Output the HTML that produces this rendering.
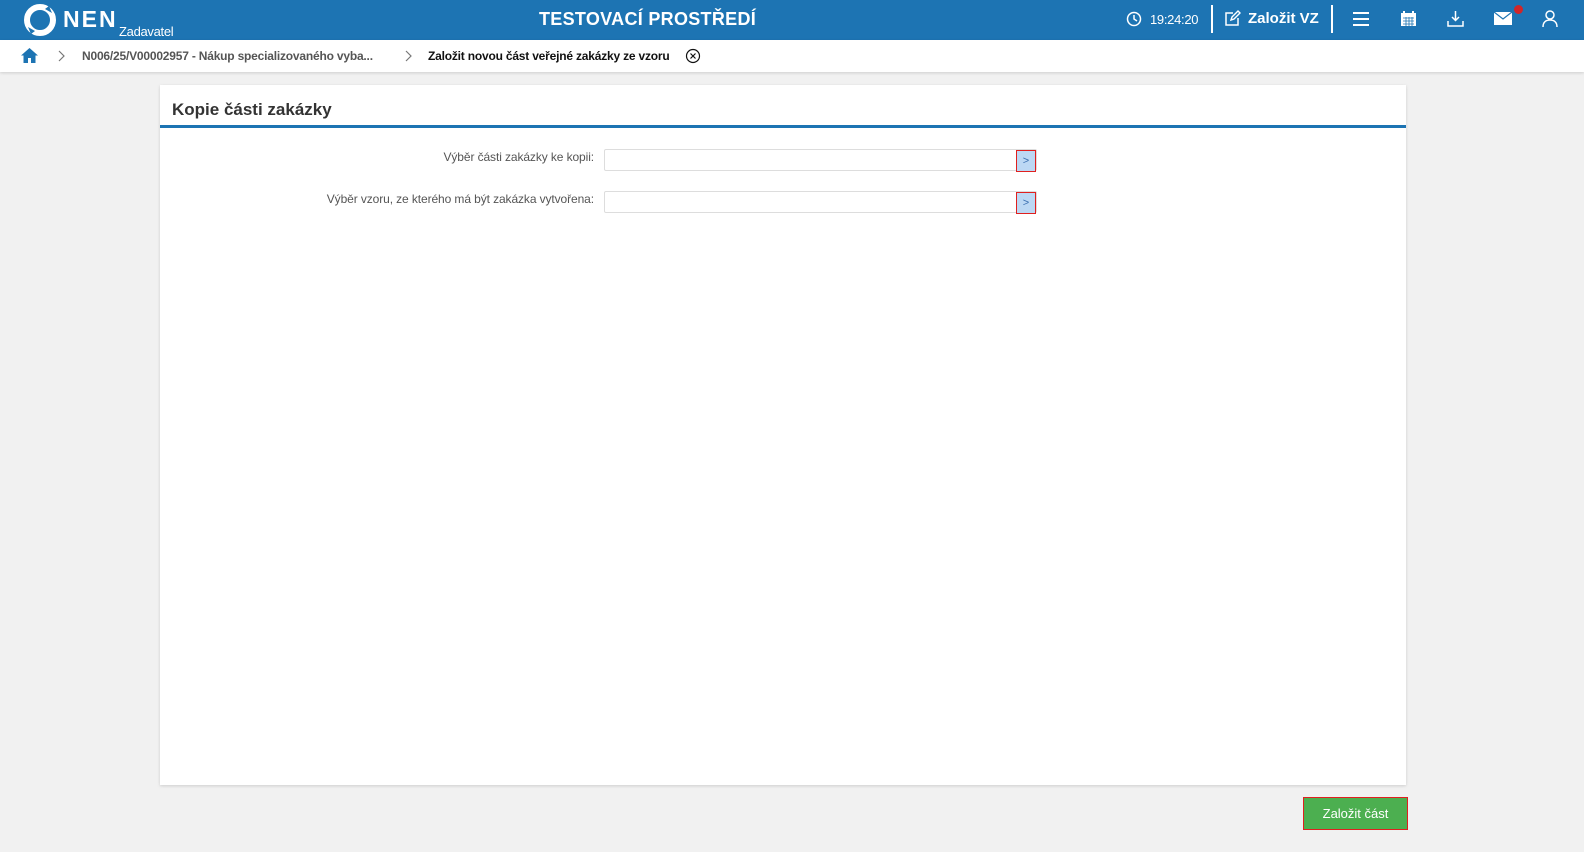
<!DOCTYPE html>
<html><head><meta charset="utf-8"><style>
*{box-sizing:border-box;margin:0;padding:0}
body{width:1584px;height:852px;background:#f1f1f1;font-family:"Liberation Sans",sans-serif;position:relative;overflow:hidden}
.hdr{position:absolute;left:0;top:0;width:1584px;height:40px;background:#1d74b3;color:#fff}
.a{position:absolute}
.bc{position:absolute;top:40px;left:0;width:1584px;height:32px;background:#fff;box-shadow:0 1px 3px rgba(0,0,0,.15);font-size:12px;font-weight:bold;letter-spacing:-.2px}
.card{position:absolute;left:160px;top:85px;width:1246px;height:700px;background:#fff;box-shadow:0 1px 3px rgba(0,0,0,.15)}
.lbl{position:absolute;right:0;font-size:12px;color:#555;text-align:right;letter-spacing:-.1px}
.inp{position:absolute;left:604px;width:433px;height:22px;border:1px solid #ddd;border-radius:2px;background:#fff}
.btnp{position:absolute;right:0;top:0;width:20px;height:22px;background:#bcd8f4;border:1px solid #e0201f;color:#3a6fb0;font-size:11px;text-align:center;line-height:20px}
</style></head><body>
<div class="hdr">
 <svg class="a" style="left:23px;top:3px" width="34" height="34" viewBox="0 0 34 34"><circle cx="17" cy="17" r="13" fill="none" stroke="#fff" stroke-width="6"/><path d="M5 24 L12 28 L8 31Z M29 10 L22 6 L26 3Z" fill="#1d74b3"/></svg>
 <div class="a" style="left:63px;top:6px;font-size:23px;font-weight:bold;letter-spacing:2px">NEN</div>
 <div class="a" style="left:119px;top:24px;font-size:13px;letter-spacing:-.3px">Zadavatel</div>
 <div class="a" style="left:539px;top:9px;font-size:18px;font-weight:bold;letter-spacing:.3px">TESTOVACÍ PROSTŘEDÍ</div>
 <svg class="a" style="left:1126px;top:11px" width="16" height="16" viewBox="0 0 16 16"><circle cx="8" cy="8" r="6.5" fill="none" stroke="#fff" stroke-width="1.5"/><path d="M8 4v4l3 2" fill="none" stroke="#fff" stroke-width="1.5"/></svg>
 <div class="a" style="left:1150px;top:12px;font-size:13px;letter-spacing:-.3px">19:24:20</div>
 <div class="a" style="left:1211px;top:5px;width:2px;height:28px;background:#fff"></div>
 <svg class="a" style="left:1224px;top:10px" width="17" height="17" viewBox="0 0 17 17"><path d="M9 3H2v12h12V8" fill="none" stroke="#fff" stroke-width="1.5"/><path d="M7 10l1-3 6-6 2 2-6 6z" fill="none" stroke="#fff" stroke-width="1.4"/></svg>
 <div class="a" style="left:1248px;top:10px;font-size:15px;font-weight:bold">Založit VZ</div>
 <div class="a" style="left:1331px;top:5px;width:2px;height:28px;background:#fff"></div>
 <div class="a" style="left:1353px;top:12px;width:16px;height:2px;background:#fff;box-shadow:0 6px 0 #fff,0 12px 0 #fff"></div>
 <svg class="a" style="left:1400px;top:10px" width="17" height="17" viewBox="0 0 17 17"><rect x="1" y="3" width="15" height="13" fill="#fff"/><path d="M4 1v4M13 1v4" stroke="#fff" stroke-width="2"/><path d="M3 8h11M3 11h11M3 14h11M6 7v9M9 7v9M12 7v9" stroke="#1d74b3" stroke-width=".8"/></svg>
 <svg class="a" style="left:1447px;top:10px" width="17" height="17" viewBox="0 0 17 17"><path d="M8.5 1v9M5 7l3.5 3.5L12 7M1 11v5h15v-5" fill="none" stroke="#fff" stroke-width="1.5"/></svg>
 <svg class="a" style="left:1494px;top:12px" width="18" height="13" viewBox="0 0 18 13"><rect width="18" height="13" fill="#fff"/><path d="M0 0l9 7 9-7" fill="none" stroke="#1d74b3" stroke-width="1.2"/></svg>
 <div class="a" style="left:1514px;top:5px;width:9px;height:9px;border-radius:50%;background:#d0262a"></div>
 <svg class="a" style="left:1542px;top:10px" width="16" height="18" viewBox="0 0 16 18"><circle cx="8" cy="5" r="4" fill="none" stroke="#fff" stroke-width="1.5"/><path d="M1 17c0-5 3-7 7-7s7 2 7 7" fill="none" stroke="#fff" stroke-width="1.5"/></svg>
</div>
<div class="bc">
 <svg class="a" style="left:21px;top:8px" width="17" height="15" viewBox="0 0 17 15"><path d="M8.5 0L0 7.5h2.5V15h4.5v-5h3v5h4.5V7.5H17z" fill="#1d74b3"/></svg>
 <svg class="a" style="left:58px;top:10px" width="8" height="12"><path d="M1 1l5 5-5 5" fill="none" stroke="#777" stroke-width="1.2"/></svg>
 <div class="a" style="left:82px;top:9px;color:#555">N006/25/V00002957 - Nákup specializovaného vyba...</div>
 <svg class="a" style="left:405px;top:10px" width="8" height="12"><path d="M1 1l5 5-5 5" fill="none" stroke="#777" stroke-width="1.2"/></svg>
 <div class="a" style="left:428px;top:9px;color:#111">Založit novou část veřejné zakázky ze vzoru</div>
 <svg class="a" style="left:685px;top:8px" width="16" height="16" viewBox="0 0 16 16"><circle cx="8" cy="8" r="6.5" fill="none" stroke="#111" stroke-width="1.2"/><path d="M5.5 5.5l5 5M10.5 5.5l-5 5" stroke="#111" stroke-width="1.2"/></svg>
</div>
<div class="card">
 <div class="a" style="left:12px;top:15px;font-size:17px;font-weight:bold;color:#333">Kopie části zakázky</div>
 <div class="a" style="left:0;top:40px;width:1246px;height:3px;background:#1d74b3"></div>
</div>
<div class="a" style="left:0;top:149px;width:594px"><div class="lbl" style="top:1px">Výběr části zakázky ke kopii:</div></div>
<div class="inp" style="top:149px"><div class="btnp">&gt;</div></div>
<div class="a" style="left:0;top:191px;width:594px"><div class="lbl" style="top:1px">Výběr vzoru, ze kterého má být zakázka vytvořena:</div></div>
<div class="inp" style="top:191px"><div class="btnp">&gt;</div></div>
<div class="a" style="left:1303px;top:797px;width:105px;height:33px;background:#4caf50;border:1px solid #e0201f;color:#fff;font-size:13px;text-align:center;line-height:31px">Založit část</div>
</body></html>
